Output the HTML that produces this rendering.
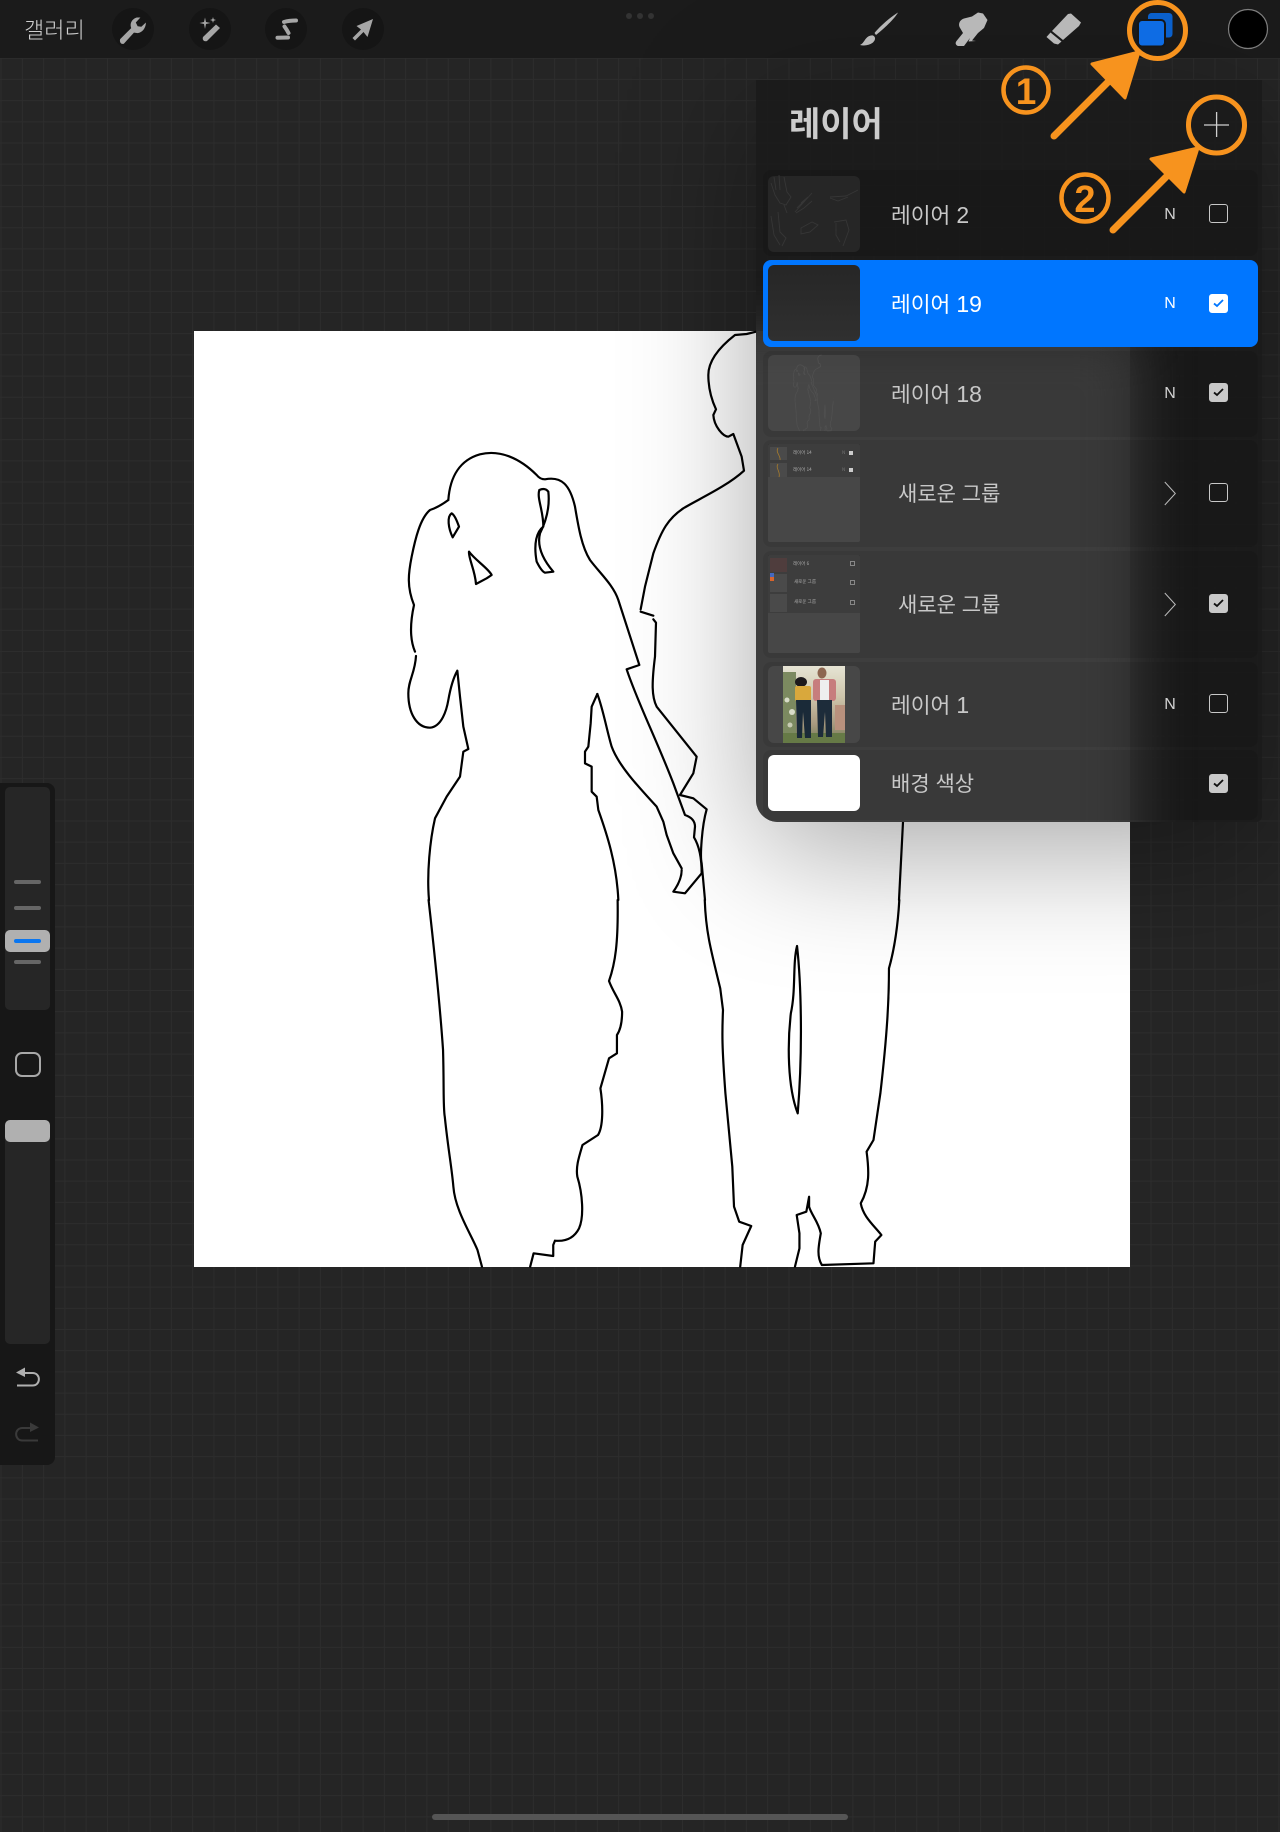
<!DOCTYPE html>
<html lang="ko">
<head>
<meta charset="utf-8">
<title>레이어</title>
<style>
html,body{margin:0;padding:0;background:#252525}
body{position:relative;width:1280px;height:1832px;overflow:hidden;font-family:"Liberation Sans","Noto Sans CJK KR",sans-serif;color:#cfcfcf}
.abs{position:absolute}
#grid{left:0;top:0;width:1280px;height:1832px;background-color:#252525;
background-image:linear-gradient(to right,#2d2d2d 1px,transparent 1px),linear-gradient(to bottom,#2d2d2d 1px,transparent 1px);
background-size:21.3px 21.2px;background-position:0.5px 15.4px}
#top{left:0;top:0;width:1280px;height:58px;background:#1b1b1b}
.circ{position:absolute;top:8px;width:42px;height:42px;border-radius:50%;background:#151515}
.dot{position:absolute;top:13px;width:6px;height:6px;border-radius:50%;background:#333}
#gal{left:24px;top:12px;font-size:22px;line-height:34px;color:#cfcfcf;white-space:nowrap;font-family:"Noto Sans CJK KR",sans-serif;font-weight:300}
#canvas{left:194px;top:331px;width:936px;height:936px;background:#fff}
#side{left:0;top:783px;width:55px;height:682px;background:#171717;border-radius:0 8px 8px 0}
.track{position:absolute;left:5px;width:45px;background:#262626;border-radius:5px}
.handle{position:absolute;left:5px;width:45px;height:22px;background:#b0b0b0;border-radius:5px}
.tick{position:absolute;left:14px;width:27px;height:4px;background:#666;border-radius:2px}
#panel{left:756px;top:80px;width:506px;height:742px;background:rgba(27,27,27,.93);border-radius:0 0 6px 22px;box-shadow:0 30px 140px rgba(0,0,0,.34)}
#clip{position:absolute;left:0;top:0;width:506px;height:742px;overflow:hidden;border-radius:0 0 6px 22px}
#glow{position:absolute;left:-100px;top:254px;width:480px;height:800px;background:#3e3e3e;filter:blur(26px)}
.row{position:absolute;left:763px;width:495px;background:rgba(0,0,0,.08);border-radius:8px}
.thumb{position:absolute;left:768px;width:92px;background:rgba(255,255,255,.075);border-radius:6px}
.t{position:absolute;font-family:"Liberation Sans","Noto Sans CJK KR",sans-serif;font-size:21.5px;line-height:30px;height:30px;white-space:nowrap;font-weight:400;color:#c8c8c8}
.t span{font-size:23px}
.n{position:absolute;left:1164px;width:12px;text-align:center;font-size:16px;line-height:20px;color:#d2d2d2}
.cb{position:absolute;left:1209px;width:19px;height:19px;box-sizing:border-box;border:1.5px solid #c8c8c8;border-radius:3px}
.cb.on{background:#c9c9c9}
.cb svg{position:absolute;left:3px;top:4px}
.mr{position:absolute;left:768px;width:92px;background:rgba(0,0,0,.13)}
.mt{position:absolute;left:770px;width:17px;background:rgba(255,255,255,.07)}
.ms{position:absolute;font-size:4.5px;line-height:6px;color:#aaa;white-space:nowrap;font-family:"Noto Sans CJK KR",sans-serif}
#home{left:432px;top:1814px;width:416px;height:6px;border-radius:3px;background:#555}
svg.full{position:absolute;left:0;top:0}
</style>
</head>
<body>
<div id="grid" class="abs"></div>
<div id="canvas" class="abs"></div>

<svg class="full" width="1280" height="1832" viewBox="0 0 1280 1832" fill="none" stroke="#000" stroke-width="2.2" stroke-linejoin="round" stroke-linecap="round">
<defs>
<g id="sil">
<g transform="translate(380 430) scale(.33333)">
<path vector-effect="non-scaling-stroke" d="M205 210C210 140 240 90 300 73C360 58 420 85 470 135Q480 148 495 148C545 138 570 165 585 230C595 290 605 350 630 390C660 430 700 465 715 510L778 705L740 718C770 810 830 930 880 1060L915 1155Q945 1165 945 1190L942 1222Q965 1260 965 1330L915 1390L880 1385Q905 1350 905 1320"/>
<path vector-effect="non-scaling-stroke" d="M205 210Q175 232 150 240C120 265 105 330 95 380C85 430 80 470 102 525C90 580 90 630 105 665"/>
<path vector-effect="non-scaling-stroke" d="M108 678C105 730 85 750 85 790C85 850 110 893 150 893C185 890 200 840 205 810C212 770 222 740 232 722L240 800L250 890L265 957L250 965L240 1040L200 1100L165 1165C150 1230 140 1330 147 1410"/>
<path vector-effect="non-scaling-stroke" d="M652 792C670 840 680 900 695 950C715 1005 770 1065 830 1130L850 1175L860 1215L880 1270L905 1315"/>
<path vector-effect="non-scaling-stroke" d="M652 792L635 830L632 880L625 950L615 965L615 1000L635 1010L635 1085L650 1100L655 1140C680 1210 710 1300 715 1410"/>
<path vector-effect="non-scaling-stroke" d="M215 250C200 260 205 295 218 322L237 290Q225 255 215 250Z"/>
<path vector-effect="non-scaling-stroke" d="M267 365C265 385 285 420 288 462L320 445L335 435C325 415 285 390 267 365Z"/>
<path vector-effect="non-scaling-stroke" d="M478 180C470 205 490 240 490 290C470 305 460 340 470 395Q485 425 495 428L520 425C490 390 470 350 480 310C500 270 510 230 505 185Q495 172 478 180Z"/>
<path vector-effect="non-scaling-stroke" d="M782 545L820 557M820 568L828 578L825 680C815 760 815 800 830 830L950 980L940 1030L900 1095L940 1105L980 1138C965 1190 960 1280 965 1300L975 1410"/>
</g>
<g transform="translate(640 320) scale(.33333)">
<path vector-effect="non-scaling-stroke" d="M348 35L320 42L285 45C240 80 205 120 205 165C205 205 215 240 228 268L220 285C222 320 250 350 265 350L280 342L305 410L312 452C260 500 170 540 130 565C85 595 65 630 40 700L15 800L2 868"/>
</g>
<g transform="translate(400 900) scale(.34435 .33333)">
<path vector-effect="non-scaling-stroke" d="M83 0C95 110 115 300 125 450C128 560 125 620 130 650C140 750 150 800 155 860C160 930 205 1000 225 1050L238 1100"/>
<path vector-effect="non-scaling-stroke" d="M632 0C634 130 625 190 607 243C620 280 640 300 645 335C645 370 640 390 630 405L630 460L607 475L582 565C590 620 590 680 575 705L530 735C520 770 510 800 515 830C530 880 535 950 520 985C505 1015 480 1025 450 1022L445 1035L445 1068L388 1060L378 1100"/>
<path vector-effect="non-scaling-stroke" d="M885 0C888 90 900 140 930 265L938 330C935 400 935 440 945 580L965 800L970 920L985 965L1020 978L995 1035L988 1100"/>
<path vector-effect="non-scaling-stroke" d="M1450 0C1445 90 1435 150 1420 205C1420 300 1415 400 1395 580L1375 720L1355 755C1362 810 1365 860 1338 910C1345 950 1375 975 1398 1005L1380 1025L1378 1050L1375 1090L1225 1095C1210 1070 1215 1040 1222 1000C1215 965 1195 945 1188 920L1188 890L1180 935L1152 945L1160 1000L1160 1045L1147 1100"/>
<path vector-effect="non-scaling-stroke" d="M1153 138C1140 190 1150 270 1135 340C1125 430 1125 560 1155 640C1170 450 1165 250 1153 138Z"/>
</g>
<path d="M899 900L903 822"/>
</g>
</defs>
<use href="#sil"/>
</svg>

<div id="top" class="abs">
  <div id="gal" class="abs">갤러리</div>
  <div class="circ" style="left:112px"></div>
  <div class="circ" style="left:189px"></div>
  <div class="circ" style="left:265px"></div>
  <div class="circ" style="left:342px"></div>
  <div class="dot" style="left:626px"></div>
  <div class="dot" style="left:637px"></div>
  <div class="dot" style="left:648px"></div>
</div>

<div id="side" class="abs"></div>
<div class="track" style="top:787px;height:223px"></div>
<div class="tick" style="top:880px"></div>
<div class="tick" style="top:906px"></div>
<div class="handle" style="top:930px"></div>
<div class="tick" style="top:939px;background:#0a76f0"></div>
<div class="tick" style="top:960px"></div>
<div class="abs" style="left:15px;top:1052px;width:26px;height:25px;box-sizing:border-box;border:2.5px solid #a8a8a8;border-radius:7px"></div>
<div class="track" style="top:1120px;height:224px"></div>
<div class="handle" style="top:1120px"></div>

<div id="panel" class="abs"><div id="clip"><div id="glow"></div></div></div>

<div class="row" style="top:170px;height:86px"></div>
<div class="row" style="top:260px;height:87px;background:#0076ff"></div>
<div class="row" style="top:351px;height:86px"></div>
<div class="row" style="top:440px;height:107px"></div>
<div class="row" style="top:551px;height:107px"></div>
<div class="row" style="top:662px;height:85px"></div>
<div class="row" style="top:750px;height:70px"></div>

<div class="thumb" style="top:176px;height:76px;background:#262626"></div>
<div class="thumb" style="top:265px;height:76px;background:linear-gradient(#262626,#303030)"></div>
<div class="thumb" style="top:355px;height:76px"></div>
<div class="thumb" style="top:444px;height:98px;border-radius:2px"></div>
<div class="thumb" style="top:555px;height:98px;border-radius:2px"></div>
<div class="thumb" style="top:666px;height:77px"></div>
<div class="thumb" style="top:755px;height:56px;background:#fff"></div>

<div class="mr" style="top:444px;height:33px"></div>
<div class="mt" style="top:447px;height:13px"></div>
<div class="mt" style="top:463px;height:14px"></div>
<div class="ms" style="left:793px;top:450px">레이어 14</div>
<div class="ms" style="left:793px;top:467px">레이어 14</div>
<div class="abs" style="left:849px;top:451px;width:4px;height:4px;background:#ccc"></div>
<div class="abs" style="left:849px;top:468px;width:4px;height:4px;background:#ccc"></div>
<div class="ms" style="left:842px;top:450px;color:#777">N</div>
<div class="ms" style="left:842px;top:467px;color:#777">N</div>

<div class="mr" style="top:555px;height:58px"></div>
<div class="mt" style="top:558px;height:14px;background:#4f3d3d"></div>
<div class="mt" style="top:574px;height:18px"></div>
<div class="mt" style="top:594px;height:18px"></div>
<div class="abs" style="left:770px;top:577px;width:4px;height:4px;background:#d8642c"></div>
<div class="abs" style="left:770px;top:573px;width:4px;height:4px;background:#4568c0"></div>
<div class="ms" style="left:793px;top:561px">레이어 6</div>
<div class="ms" style="left:794px;top:579px">새로운 그룹</div>
<div class="ms" style="left:794px;top:599px">새로운 그룹</div>
<div class="abs" style="left:850px;top:561px;width:3px;height:3px;border:.7px solid #888"></div>
<div class="abs" style="left:850px;top:580px;width:3px;height:3px;border:.7px solid #888"></div>
<div class="abs" style="left:850px;top:600px;width:3px;height:3px;border:.7px solid #888"></div>

<div class="abs" style="left:789px;top:99px;font-family:'Noto Sans CJK KR',sans-serif;font-size:34px;line-height:46px;font-weight:700;color:#cccccc">레이어</div>

<div class="t" style="left:891px;top:200px">레이어 <span>2</span></div>
<div class="t" style="left:891px;top:289px;color:#fff">레이어 <span>19</span></div>
<div class="t" style="left:891px;top:379px">레이어 <span>18</span></div>
<div class="t" style="left:898px;top:480px;font-size:21px">새로운 그룹</div>
<div class="t" style="left:898px;top:591px;font-size:21px">새로운 그룹</div>
<div class="t" style="left:891px;top:690px">레이어 <span>1</span></div>
<div class="t" style="left:891px;top:770px;font-size:21px">배경 색상</div>

<div class="n" style="top:205px">N</div>
<div class="n" style="top:294px;color:#fff">N</div>
<div class="n" style="top:384px">N</div>
<div class="n" style="top:695px">N</div>

<div class="cb" style="top:204px"></div>
<div class="cb" style="top:294px;background:#fff;border-color:#fff"><svg width="11" height="9" viewBox="0 0 11 9" fill="none" stroke="#0076ff" stroke-width="1.8"><path d="M1 4.500L4 7L10 1"/></svg></div>
<div class="cb on" style="top:383px"><svg width="11" height="9" viewBox="0 0 11 9" fill="none" stroke="#111" stroke-width="1.8"><path d="M1 4.500L4 7L10 1"/></svg></div>
<div class="cb" style="top:483px"></div>
<div class="cb on" style="top:594px"><svg width="11" height="9" viewBox="0 0 11 9" fill="none" stroke="#111" stroke-width="1.8"><path d="M1 4.500L4 7L10 1"/></svg></div>
<div class="cb" style="top:694px"></div>
<div class="cb on" style="top:774px"><svg width="11" height="9" viewBox="0 0 11 9" fill="none" stroke="#111" stroke-width="1.8"><path d="M1 4.500L4 7L10 1"/></svg></div>

<div id="home" class="abs"></div>

<svg class="full" width="1280" height="1832" viewBox="0 0 1280 1832" fill="none">
<!-- top left icons -->
<g fill="#a6a6a6">
  <g transform="translate(133.500 29) scale(.92) translate(-135.500 -29)"><path d="M122 36L134 24C132 19 135 14 140 12.500L144 12.500L139 18L141 22L145 22.500L150 18C150 24 146 29 141 29.500L137 29L126 41C123 42 121 39 122 36Z" transform="translate(-1 4)"/></g>
  <path d="M203 37L216 24.500L220 28L207 41C204 42 202 40 203 37Z"/>
  <path d="M205 17.500L206 22L210.500 23L206 24L205 29L204 24L199.500 23L204 22Z"/>
  <path d="M213 17L213.700 19.300L216 20L213.700 20.700L213 23L212.300 20.700L210 20L212.300 19.300Z"/>
  <path d="M373 19L367.500 37L363.500 32L355 40.500L352.500 38L361 29.500L356.500 26Z"/>
</g>
<path d="M284 22Q289 20.500 296 20.500" stroke="#a6a6a6" stroke-width="4" stroke-linecap="round"/>
<path d="M284.500 26.500Q287 30 288.500 33" stroke="#a6a6a6" stroke-width="4" stroke-linecap="round"/>
<path d="M277.500 37.700Q283 37.500 288 37.500" stroke="#a6a6a6" stroke-width="4" stroke-linecap="round"/>
<!-- tool icons -->
<g fill="#b8b8b8">
  <path d="M898 12.500C895 18 885 28 876 35L874.500 33C881 25 892 16 898 12.500Z"/>
  <path d="M873 35.500C876 37 875.500 40 873 42.500C869 45.500 864 46 860 45C863 43.500 864 41 866 38.500C868 36 871 35 873 35.500Z"/>
  <path d="M978 12.500L983 13.500L987.500 20L984 28L978 33L972 40.500L976 41L968.500 41.500L970 38L964 46L958 46C955.500 45 955 43 956.500 41L963 33L959.500 27C958 23 960.500 19.500 964 18.500L972 16.500Z"/>
  <path d="M1071 13.500L1081 22.500L1079 26L1063 40L1052 31L1068 14Z"/>
  <path d="M1050.500 32.500L1061.500 41.500L1058 44.500L1054 43.500L1046.500 37Z"/>
</g>
<!-- layers -->
<rect x="1148" y="13" width="24.500" height="24.500" rx="3.500" fill="#0a60cc"/>
<rect x="1138" y="20" width="27" height="26.500" rx="4" fill="#0e6ce4" stroke="#161616" stroke-width="2"/>
<!-- colour -->
<circle cx="1248" cy="29" r="19.500" fill="#000" stroke="#7e7e7e" stroke-width="1.200"/>
<!-- plus -->
<path d="M1204 125H1229M1216.600 112V137" stroke="#cfcfcf" stroke-width="1.300"/>
<!-- chevrons -->
<path d="M1164.800 482L1175.300 493.500L1164.800 505" stroke="#bbb" stroke-width="1"/>
<path d="M1164.800 593L1175.300 604.500L1164.800 616" stroke="#bbb" stroke-width="1"/>
<!-- undo / redo -->
<path d="M24 1373H32.500C41 1373 41 1385.500 32.500 1385.500H17" stroke="#b0b0b0" stroke-width="2"/>
<path d="M16 1372.500L25 1367.500V1377Z" fill="#b0b0b0"/>
<path d="M31 1428H22.500C14 1428 14 1440.500 22.500 1440.500H38" stroke="#3a3a3a" stroke-width="2"/>
<path d="M39 1427.500L30 1422.500V1432Z" fill="#3a3a3a"/>

<!-- layer 2 thumbnail sketch -->
<g stroke="#363636" stroke-width=".9">
  <path d="M771 183L775 195L780 203L786 205L791 197L787 192L784 177M776 190L774 177M780 190L779 175M784 205L787 213"/>
  <path d="M795 212L812 193M797 208L808 197L801 203M796 213L804 208L812 201"/>
  <path d="M830 197L846 196L858 190M830 198L838 201L848 197"/>
  <path d="M771 216L774 235L780 245M778 212L780 232L786 238L782 246"/>
  <path d="M801 228L812 222L818 225L810 232L801 234Z"/>
  <path d="M834 222L846 220L849 230L846 238L843 246M836 223L836 235L840 242"/>
</g>
<!-- layer 18 thumbnail silhouette -->
<g transform="translate(776 355) scale(.0812) translate(-194 -331)" stroke="#505050" stroke-width=".8" stroke-linejoin="round"><use href="#sil" stroke="#505050" stroke-width=".8"/></g>
<!-- group mini sketch -->
<path d="M778 448C775 452 781 456 780 460M778 464C775 468 781 472 779 477" stroke="#a87c2c" stroke-width=".8"/>

<!-- photo thumbnail -->
<defs>
<linearGradient id="ph" x1="0" y1="0" x2="0" y2="1">
  <stop offset="0" stop-color="#e6e4d4"/>
  <stop offset=".4" stop-color="#cfc6ac"/>
  <stop offset=".75" stop-color="#a99a80"/>
  <stop offset="1" stop-color="#6f7c52"/>
</linearGradient>
</defs>
<rect x="783" y="666" width="62" height="77" fill="url(#ph)"/>
<rect x="783" y="672" width="13" height="71" fill="#7c8a60"/>
<rect x="835" y="705" width="10" height="25" fill="#b9917d"/>
<rect x="783" y="733" width="62" height="10" fill="#667a46"/>
<circle cx="792" cy="712" r="3" fill="#d8dcc8"/><circle cx="787" cy="700" r="2.500" fill="#d8dcc8"/><circle cx="790" cy="725" r="2.500" fill="#c8ccb4"/>
<ellipse cx="801" cy="682" rx="6" ry="5" fill="#1d1a1c"/>
<rect x="795" y="686" width="16" height="15" rx="2" fill="#d9a83c"/>
<path d="M796 700H811L811 738H805L803 712L802 738H797Z" fill="#1a2a38"/>
<ellipse cx="822" cy="673" rx="4.500" ry="5.500" fill="#8d6650"/>
<rect x="813" y="679" width="23" height="22" rx="3" fill="#c77d7d"/>
<rect x="820" y="680" width="9" height="20" fill="#eeeeee"/>
<path d="M817 700H832L832 737H826L825 712L823 737H818Z" fill="#1d2c3a"/>

<!-- orange annotations -->
<g stroke="#f7931e" fill="none">
  <circle cx="1157.500" cy="30.500" r="28" stroke-width="5"/>
  <circle cx="1216.500" cy="125" r="28" stroke-width="5"/>
  <circle cx="1026" cy="90" r="22.500" stroke-width="4.500"/>
  <circle cx="1085" cy="198" r="23.500" stroke-width="4.500"/>
  <path d="M1054 136L1108 82" stroke-width="7" stroke-linecap="round"/>
  <path d="M1113 230L1166 177" stroke-width="7" stroke-linecap="round"/>
</g>
<g fill="#f7931e" stroke="#f7931e" stroke-width="3" stroke-linejoin="round">
  <path d="M1092 64L1139 52L1125 98Z"/>
  <path d="M1151 159L1198 148L1184 192Z"/>
</g>
<text x="1026" y="104" text-anchor="middle" font-family="Liberation Sans, sans-serif" font-weight="700" font-size="37" fill="#f7931e">1</text>
<text x="1085" y="212" text-anchor="middle" font-family="Liberation Sans, sans-serif" font-weight="700" font-size="38" fill="#f7931e">2</text>
</svg>
</body>
</html>
